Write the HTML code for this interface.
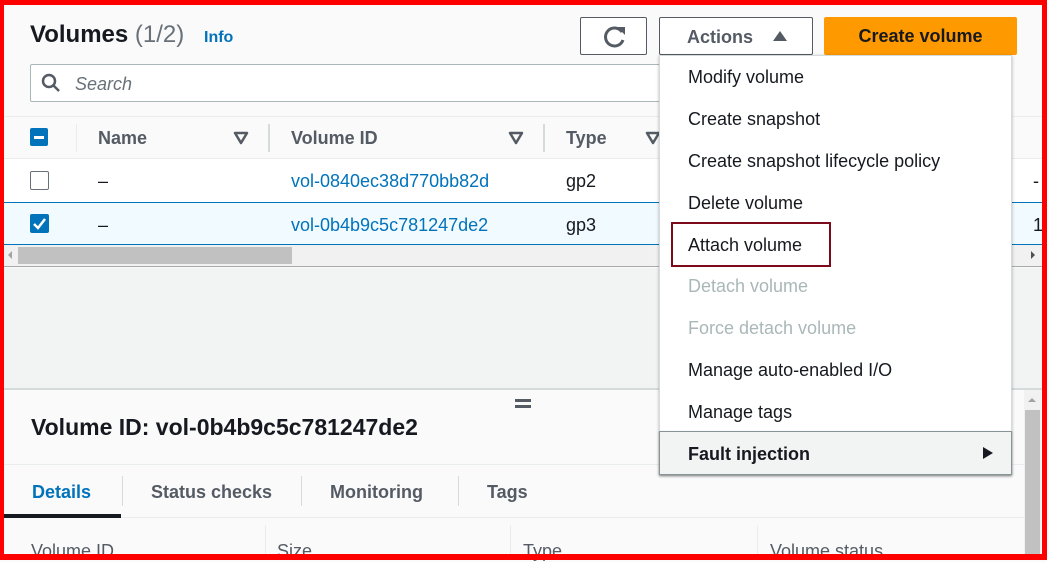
<!DOCTYPE html>
<html><head><style>
*{box-sizing:border-box;margin:0;padding:0}
body{width:1047px;height:560px;overflow:hidden;position:relative;background:#fafafa;font-family:"Liberation Sans",sans-serif;color:#16191f}
.a{position:absolute;white-space:nowrap}
.frame{position:absolute;left:0;top:0;width:1047px;height:560px;border:solid #ff0000;border-width:5px 5px 6px 4px;z-index:50;pointer-events:none}
.btn{position:absolute;border:1px solid #545b64;border-radius:2px;background:#fff}
.th{font-weight:bold;font-size:18px;color:#545b64}
.link{color:#0073bb}
.mi{position:absolute;left:688px;font-size:18px;color:#16191f}
.dis{color:#aab7b8}
</style></head><body>
<div class="a" style="left:30px;top:21px;font-size:24px;font-weight:bold">Volumes <span style="font-weight:normal;color:#687078">(1/2)</span></div>
<div class="a link" style="left:204px;top:29px;font-size:16px;font-weight:bold">Info</div>
<div class="btn" style="left:580px;top:17px;width:67px;height:38px"><svg width="67" height="38" viewBox="0 0 67 38"><path d="M41 14 A9 9 0 1 0 42 22" fill="none" stroke="#545b64" stroke-width="3"/><path d="M36 9 L44 9 L44 17 Z" fill="#545b64"/></svg></div>
<div class="btn" style="left:659px;top:17px;width:154px;height:38px"><span class="a th" style="left:27px;top:9px">Actions</span><svg class="a" style="left:112px;top:12px" width="16" height="12"><path d="M1 11 L8 1 L15 11Z" fill="#545b64"/></svg></div>
<div class="a" style="left:824px;top:17px;width:193px;height:38px;background:#ff9900;border-radius:2px;font-weight:bold;font-size:18px;text-align:center;line-height:39px">Create volume</div>
<div class="a" style="left:30px;top:64px;width:640px;height:38px;border:1px solid #aab7b8;border-radius:2px;background:#fff"></div>
<svg class="a" style="left:41px;top:73px" width="20" height="20"><circle cx="8" cy="8" r="6" fill="none" stroke="#545b64" stroke-width="2.5"/><path d="M12.5 12.5 L18 18" stroke="#545b64" stroke-width="2.5"/></svg>
<div class="a" style="left:75px;top:74px;font-size:18px;font-style:italic;color:#687078">Search</div>
<div class="a" style="left:4px;top:116px;width:1040px;height:43px;background:#fafafa;border-top:1px solid #eaeded;border-bottom:1px solid #eaeded"></div>
<div class="a" style="left:30px;top:128px;width:18px;height:18px;background:#0073bb;border-radius:2px"><div style="position:absolute;left:4px;top:8px;width:10px;height:2.5px;background:#fff"></div></div>
<div class="a" style="left:76px;top:124px;width:1px;height:28px;background:#eaeded"></div>
<div class="a th" style="left:98px;top:128px">Name</div>
<svg class="a" style="left:233px;top:131px" width="16" height="14"><path d="M2 2 L14 2 L8 12Z" fill="none" stroke="#545b64" stroke-width="2.5" stroke-linejoin="round"/></svg>
<div class="a" style="left:268px;top:124px;width:2px;height:28px;background:#d5dbdb"></div>
<div class="a th" style="left:291px;top:128px">Volume ID</div>
<svg class="a" style="left:508px;top:131px" width="16" height="14"><path d="M2 2 L14 2 L8 12Z" fill="none" stroke="#545b64" stroke-width="2.5" stroke-linejoin="round"/></svg>
<div class="a" style="left:543px;top:124px;width:2px;height:28px;background:#d5dbdb"></div>
<div class="a th" style="left:566px;top:128px">Type</div>
<svg class="a" style="left:645px;top:131px" width="16" height="14"><path d="M2 2 L14 2 L8 12Z" fill="none" stroke="#545b64" stroke-width="2.5" stroke-linejoin="round"/></svg>
<div class="a" style="left:4px;top:159px;width:1040px;height:43px;background:#fff"></div>
<div class="a" style="left:30px;top:171px;width:19px;height:19px;border:1.5px solid #687078;border-radius:2px;background:#fff"></div>
<div class="a" style="left:98px;top:171px;font-size:18px">–</div>
<div class="a link" style="left:291px;top:171px;font-size:18px">vol-0840ec38d770bb82d</div>
<div class="a" style="left:566px;top:171px;font-size:18px">gp2</div>
<div class="a" style="left:1033px;top:171px;font-size:18px">-</div>
<div class="a" style="left:4px;top:202px;width:1040px;height:43px;background:#f1faff;border-top:1px solid #0073bb;border-bottom:1px solid #0073bb"></div>
<div class="a" style="left:30px;top:214px;width:19px;height:19px;background:#0073bb;border-radius:2px"><svg width="19" height="19"><path d="M4 10 L8 14 L15 5" fill="none" stroke="#fff" stroke-width="2.5"/></svg></div>
<div class="a" style="left:98px;top:215px;font-size:18px">–</div>
<div class="a link" style="left:291px;top:215px;font-size:18px">vol-0b4b9c5c781247de2</div>
<div class="a" style="left:566px;top:215px;font-size:18px">gp3</div>
<div class="a" style="left:1033px;top:215px;font-size:18px">1</div>
<div class="a" style="left:4px;top:245px;width:1040px;height:22px;background:#f1f1f1;border-bottom:1px solid #aaa"></div>
<div class="a" style="left:18px;top:247px;width:274px;height:17px;background:#c1c1c1"></div>
<div class="a" style="left:8px;top:251px;width:0;height:0;border-top:4px solid transparent;border-bottom:4px solid transparent;border-right:4px solid #a3a3a3"></div>
<div class="a" style="left:1031px;top:251px;width:0;height:0;border-top:4px solid transparent;border-bottom:4px solid transparent;border-left:4px solid #505050"></div>
<div class="a" style="left:4px;top:268px;width:1040px;height:120px;background:#f2f3f3"></div>
<div class="a" style="left:4px;top:388px;width:1040px;height:172px;background:#fafafa;border-top:2px solid #d5dbdb"></div>
<div class="a" style="left:515px;top:399px;width:16px;height:3px;background:#545b64"></div>
<div class="a" style="left:515px;top:405px;width:16px;height:3px;background:#545b64"></div>
<div class="a" style="left:31px;top:414px;font-size:23px;font-weight:bold">Volume ID: vol-0b4b9c5c781247de2</div>
<div class="a" style="left:4px;top:464px;width:1020px;height:1px;background:#eaeded"></div>
<div class="a" style="left:4px;top:517px;width:1020px;height:1px;background:#eaeded"></div>
<div class="a" style="left:4px;top:514px;width:117px;height:4px;background:#16191f"></div>
<div class="a" style="left:32px;top:482px;font-size:18px;font-weight:bold;color:#0073bb">Details</div>
<div class="a" style="left:122px;top:476px;width:1px;height:30px;background:#d5dbdb"></div>
<div class="a th" style="left:151px;top:482px">Status checks</div>
<div class="a" style="left:301px;top:476px;width:1px;height:30px;background:#d5dbdb"></div>
<div class="a th" style="left:330px;top:482px">Monitoring</div>
<div class="a" style="left:458px;top:476px;width:1px;height:30px;background:#d5dbdb"></div>
<div class="a th" style="left:487px;top:482px">Tags</div>
<div class="a" style="left:265px;top:525px;width:1px;height:35px;background:#eaeded"></div>
<div class="a" style="left:510px;top:525px;width:1px;height:35px;background:#eaeded"></div>
<div class="a" style="left:757px;top:525px;width:1px;height:35px;background:#eaeded"></div>
<div class="a" style="left:31px;top:541px;font-size:18px;color:#545b64">Volume ID</div>
<div class="a" style="left:277px;top:541px;font-size:18px;color:#545b64">Size</div>
<div class="a" style="left:523px;top:541px;font-size:18px;color:#545b64">Type</div>
<div class="a" style="left:770px;top:541px;font-size:18px;color:#545b64">Volume status</div>
<div class="a" style="left:1024px;top:390px;width:17px;height:170px;background:#f1f1f1"></div>
<div class="a" style="left:1025px;top:410px;width:15px;height:150px;background:#c1c1c1"></div>
<div class="a" style="left:1028px;top:398px;width:0;height:0;border-left:4px solid transparent;border-right:4px solid transparent;border-bottom:4px solid #a3a3a3"></div>
<div class="a" style="left:659px;top:55px;width:353px;height:420px;background:#fff;border:1px solid #d5dbdb;box-shadow:0 1px 3px rgba(0,0,0,.3)"></div>
<div class="mi" style="top:67px">Modify volume</div>
<div class="mi" style="top:109px">Create snapshot</div>
<div class="mi" style="top:151px">Create snapshot lifecycle policy</div>
<div class="mi" style="top:193px">Delete volume</div>
<div class="a" style="left:671px;top:222px;width:160px;height:45px;border:2px solid #7d0a1a"></div>
<div class="mi" style="top:235px">Attach volume</div>
<div class="mi dis" style="top:276px">Detach volume</div>
<div class="mi dis" style="top:318px">Force detach volume</div>
<div class="mi" style="top:360px">Manage auto-enabled I/O</div>
<div class="mi" style="top:402px">Manage tags</div>
<div class="a" style="left:659px;top:431px;width:353px;height:44px;background:#f2f3f3;border:1px solid #879596;box-shadow:0 1px 2px rgba(0,0,0,.3)"></div>
<div class="mi" style="top:444px;font-weight:bold">Fault injection</div>
<svg class="a" style="left:982px;top:446px" width="12" height="14"><path d="M1 1 L11 7 L1 13Z" fill="#16191f"/></svg>
<div class="frame"></div>
</body></html>
